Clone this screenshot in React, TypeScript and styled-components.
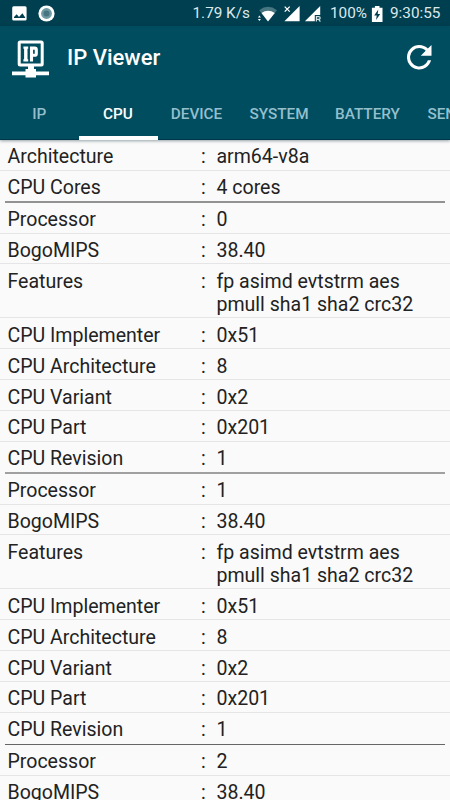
import React from "react";
import styled, { createGlobalStyle } from "styled-components";

const GlobalStyle = createGlobalStyle`
  * { box-sizing: border-box; }
  body { margin: 0; background: #fafafa; overflow: hidden; }
`;

const Screen = styled.div`
  display: flex;
  flex-direction: column;
  width: 450px;
  height: 800px;
  overflow: hidden;
  background: #fafafa;
  font-family: Roboto, "Liberation Sans", sans-serif;
`;

const StatusBar = styled.div`
  display: flex;
  justify-content: space-between;
  flex: none;
  height: 26px;
  padding: 0 0 0 12px;
  background: #003f4f;
  color: #dce9ec;
`;

const StatusGroup = styled.div<{ $gap?: number }>`
  display: flex;
  align-items: center;
  gap: ${(p) => p.$gap ?? 0}px;
  height: 27px;
`;

const StatusText = styled.span<{ $width: number }>`
  width: ${(p) => p.$width}px;
  font-size: 15.3px;
  line-height: 27px;
  white-space: nowrap;
`;

const Header = styled.header`
  flex: none;
  position: relative;
  z-index: 1;
  height: 114px;
  background: #004d60;
  box-shadow: 0 1px 3px rgba(0, 40, 50, 0.42);
`;

const Toolbar = styled.div`
  display: flex;
  align-items: center;
  height: 63px;
  padding: 0 18.5px 0 11px;
`;

const Title = styled.h1`
  flex: 1;
  margin: 0 0 0 18px;
  color: #fff;
  font-size: 22px;
  font-weight: 500;
`;

const Tabs = styled.nav`
  display: flex;
  height: 51px;
  box-shadow: inset 0 -1px #00364a;
  overflow: hidden;
`;

const Tab = styled.div<{ $width: number; $active?: boolean }>`
  flex: none;
  width: ${(p) => p.$width}px;
  height: 51px;
  padding-top: 1px;
  border-bottom: ${(p) => (p.$active ? "4px solid #fff" : "0")};
  color: ${(p) => (p.$active ? "#fff" : "#94bfcc")};
  font-size: 15.3px;
  font-weight: 500;
  line-height: 48px;
  text-align: center;
  white-space: nowrap;
`;

const List = styled.main`
  flex: 1;
  min-height: 0;
  overflow: hidden;
`;

const Row = styled.div<{ $tall?: boolean; $last?: boolean }>`
  display: grid;
  grid-template-columns: 193.5px 15.5px 1fr;
  height: ${(p) => (p.$tall ? 54 : 30.86)}px;
  padding: 5.4px 7.5px 0;
  border-bottom: 1px solid ${(p) => (p.$last ? "transparent" : "#e5e5e5")};
  color: #222;
  font-size: 19.55px;
  line-height: 23px;
  white-space: pre-line;
`;

const Divider = styled.div<{ $tone: string; $height: number }>`
  height: ${(p) => p.$height}px;
  margin: ${(p) => -(p.$height - 1)}px 5px 0;
  background: ${(p) => p.$tone};
`;

const PictureIcon = () => (
  <svg width="15" height="15" viewBox="0 0 15 15">
    <rect x="0.2" y="0.2" width="14.4" height="14.4" rx="1.5" fill="#fff" />
    <path d="M2 12V11l2.7-2.7L7 11l3.4-3.8 2.8 4.2v.6z" fill="#003f4f" />
  </svg>
);

const CircleIcon = () => (
  <svg width="17" height="17" viewBox="0 0 17 17">
    <circle cx="8.5" cy="8.5" r="8.1" fill="#fff" />
    <circle cx="8.5" cy="8.5" r="5.4" fill="#6f9aa3" />
    <circle cx="8.5" cy="8.5" r="3" fill="#447581" />
  </svg>
);

const SignalIcons = () => (
  <svg width="73" height="20" viewBox="0 0 73 20">
    <path d="M2.2 6.2Q11-.6 20 6.2l-9 11z" fill="#477580" />
    <path d="M4.5 9Q11 4.6 17.8 9L11 17.4z" fill="#fff" />
    <path d="m2.4 11.4 1.5 2H.9zM2.4 17l1.5-2H.9z" fill="#fff" />
    <path d="M42.6 2v15.2H27.4z" fill="#fff" />
    <path d="m27.7 2.6 5 5m0-5-5 5" stroke="#fff" strokeWidth="1.3" />
    <path d="M63.2 2v9h-5.4v6.2h-9.9z" fill="#fff" />
    <path d="M59.4 17.6v-5h2.3q1.5 0 1.5 1.3t-1.5 1.4h-2.3m2.2 0 1.8 2.3" fill="none" stroke="#cfe1e5" strokeWidth="1.2" />
  </svg>
);

const BatteryIcon = () => (
  <svg width="19" height="18" viewBox="0 0 19 18">
    <path d="M.9 2.8h3V1h4.6v1.8h3V17H.9z" fill="#fff" />
    <path d="M7.3 4.6 3.2 10.5h2.5l-.6 4.6 4.1-6H6.7z" fill="#003f4f" />
  </svg>
);

const LogoIcon = () => (
  <svg width="38" height="40" viewBox="0 0 38 40">
    <rect x="8.2" y="4" width="23" height="23" rx="1" fill="none" stroke="#fff" strokeWidth="3" />
    <path d="M12.4 8.5h4.8v2.3h-.7v10.4h.7v2.3h-4.8v-2.3h.7V10.8h-.7z" fill="#fff" />
    <path d="M20.5 23.5V10.1h3.2q1.6 0 1.6 1.6v4q0 1.6-1.6 1.6h-3.2" fill="none" stroke="#fff" strokeWidth="3.1" />
    <path d="M17 27.5h6v3.5h2v2.5h13v3.7H25v2.3H14.5v-2.3H1v-3.7h13.5V31H17z" fill="#fff" />
  </svg>
);

const RefreshIcon = () => (
  <svg width="24.5" height="24.5" viewBox="4 4 16 16">
    <path
      d="M17.65 6.35A7.96 7.96 0 0 0 12 4a8 8 0 1 0 7.73 10h-2.08A6 6 0 1 1 12 6c1.66 0 3.14.69 4.22 1.78L13 11h7V4z"
      fill="#fff"
    />
  </svg>
);

const tabs: [string, number][] = [
  ["IP", 78.5],
  ["CPU", 79],
  ["DEVICE", 78],
  ["SYSTEM", 87],
  ["BATTERY", 90],
  ["SENSOR", 88],
];

const features = "fp asimd evtstrm aes\npmull sha1 sha2 crc32";

const processor = (id: string): [string, string][] => [
  ["Processor", id],
  ["BogoMIPS", "38.40"],
  ["Features", features],
  ["CPU Implementer", "0x51"],
  ["CPU Architecture", "8"],
  ["CPU Variant", "0x2"],
  ["CPU Part", "0x201"],
  ["CPU Revision", "1"],
];

const sections = [
  { rows: [["Architecture", "arm64-v8a"], ["CPU Cores", "4 cores"]], tone: "#929292", height: 1.5 },
  { rows: processor("0"), tone: "#a0a0a0", height: 2 },
  { rows: processor("1"), tone: "#666", height: 1 },
  { rows: processor("2").slice(0, 2), tone: "#929292", height: 1 },
];

export default function App() {
  return (
    <Screen>
      <GlobalStyle />
      <StatusBar>
        <StatusGroup $gap={10.5}>
          <PictureIcon />
          <CircleIcon />
        </StatusGroup>
        <StatusGroup>
          <StatusText $width={64.5}>1.79 K/s</StatusText>
          <SignalIcons />
          <StatusText $width={41}>100%</StatusText>
          <BatteryIcon />
          <StatusText $width={60}>9:30:55</StatusText>
        </StatusGroup>
      </StatusBar>
      <Header>
        <Toolbar>
          <LogoIcon />
          <Title>IP Viewer</Title>
          <RefreshIcon />
        </Toolbar>
        <Tabs>
          {tabs.map(([label, width]) => (
            <Tab key={label} $width={width} $active={label === "CPU"}>
              {label}
            </Tab>
          ))}
        </Tabs>
      </Header>
      <List>
        {sections.map(({ rows, tone, height }, s) => (
          <React.Fragment key={s}>
            {rows.map(([label, value], i) => (
              <Row key={label} $tall={label === "Features"} $last={i === rows.length - 1}>
                <span>{label}</span>
                <span>:</span>
                <span>{value}</span>
              </Row>
            ))}
            {s < sections.length - 1 && <Divider $tone={tone} $height={height} />}
          </React.Fragment>
        ))}
      </List>
    </Screen>
  );
}
